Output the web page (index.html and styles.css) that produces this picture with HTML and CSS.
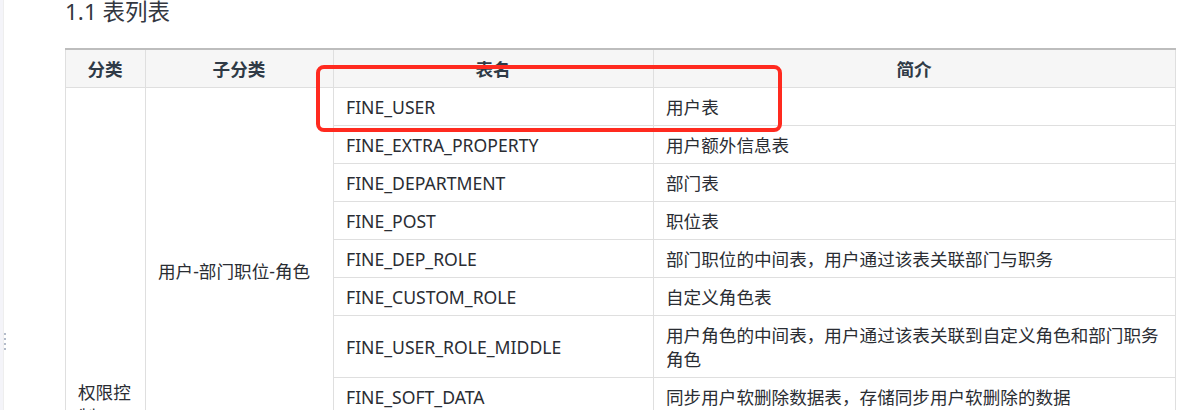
FILE: index.html
```html
<!DOCTYPE html>
<html lang="zh">
<head>
    <meta charset="UTF-8">
    <title>表列表</title>
    <link rel="stylesheet" href="styles.css">
</head>
<body>
<div class="page">
    <div class="sidebar-edge">
        <div class="drag-handle">
            <span></span><span></span><span></span><span></span>
        </div>
    </div>

    <div class="content">
        <h3 class="section-title">1.1 表列表</h3>

        <div class="table-wrap">
            <table class="doc-table">
                <colgroup>
                    <col class="col-cat">
                    <col class="col-sub">
                    <col class="col-name">
                    <col class="col-desc">
                </colgroup>
                <thead>
                <tr>
                    <th>分类</th>
                    <th>子分类</th>
                    <th>表名</th>
                    <th>简介</th>
                </tr>
                </thead>
                <tbody>
                <tr>
                    <td rowspan="16">权限控制</td>
                    <td rowspan="9">用户-部门职位-角色</td>
                    <td>FINE_USER</td>
                    <td>用户表</td>
                </tr>
                <tr>
                    <td>FINE_EXTRA_PROPERTY</td>
                    <td>用户额外信息表</td>
                </tr>
                <tr>
                    <td>FINE_DEPARTMENT</td>
                    <td>部门表</td>
                </tr>
                <tr>
                    <td>FINE_POST</td>
                    <td>职位表</td>
                </tr>
                <tr>
                    <td>FINE_DEP_ROLE</td>
                    <td>部门职位的中间表，用户通过该表关联部门与职务</td>
                </tr>
                <tr>
                    <td>FINE_CUSTOM_ROLE</td>
                    <td>自定义角色表</td>
                </tr>
                <tr>
                    <td>FINE_USER_ROLE_MIDDLE</td>
                    <td>用户角色的中间表，用户通过该表关联到自定义角色和部门职务角色</td>
                </tr>
                <tr>
                    <td>FINE_SOFT_DATA</td>
                    <td>同步用户软删除数据表，存储同步用户软删除的数据</td>
                </tr>
                <tr>
                    <td>FINE_SOFT_DATA_CONFIG</td>
                    <td>软删除数据配置表</td>
                </tr>
                <tr>
                    <td rowspan="7">权限</td>
                    <td>FINE_AUTHORITY</td>
                    <td>权限表</td>
                </tr>
                <tr>
                    <td>FINE_AUTHORITY_OBJECT</td>
                    <td>权限实体表</td>
                </tr>
                <tr>
                    <td>FINE_AUTH_PREFERENCE</td>
                    <td>权限偏好表</td>
                </tr>
                <tr>
                    <td>FINE_AUTH_TEMPLATE</td>
                    <td>权限模板表</td>
                </tr>
                <tr>
                    <td>FINE_AUTH_ENTITY</td>
                    <td>权限实体关联表</td>
                </tr>
                <tr>
                    <td>FINE_AUTH_EXTRA</td>
                    <td>权限额外信息表</td>
                </tr>
                <tr>
                    <td>FINE_AUTH_CONFIG</td>
                    <td>权限配置表</td>
                </tr>
                </tbody>
            </table>

            <div class="highlight-box"></div>
        </div>
    </div>
</div>
</body>
</html>
```

FILE: styles.css
```css
html, body {
    margin: 0;
    padding: 0;
    background: #ffffff;
}

body {
    font-family: "Noto Sans", "Noto Sans CJK SC", sans-serif;
    color: #2a2d33;
    overflow: hidden;
}

.page {
    display: flex;
    min-height: 410px;
}

.sidebar-edge {
    position: relative;
    width: 3px;
    background: #f4f4f9;
    border-right: 1px solid #eeeeee;
}

.drag-handle {
    position: absolute;
    left: 4px;
    top: 333px;
    display: flex;
    flex-direction: column;
    gap: 3px;
}

.drag-handle span {
    display: block;
    width: 2px;
    height: 2px;
    background: #b4bccb;
}

.content {
    padding-left: 61px;
}

.section-title {
    margin: 0;
    font-size: 22.5px;
    font-weight: normal;
    line-height: 23px;
    color: #333740;
}

.table-wrap {
    position: relative;
    margin-top: 25px;
}

.doc-table {
    border-collapse: collapse;
    table-layout: fixed;
    width: 1111px;
    font-size: 17.6px;
    line-height: 24px;
    border-top: 2px solid #bdbdbd;
}

.col-cat {
    width: 80px;
}

.col-sub {
    width: 188px;
}

.col-name {
    width: 320px;
}

.col-desc {
    width: 522px;
}

.doc-table th,
.doc-table td {
    border: 1px solid #dfdfdf;
    padding: 7px 13px 6px 12px;
    vertical-align: middle;
    text-align: left;
}

.doc-table th {
    background: #f6f6f6;
    font-weight: bold;
    text-align: center;
    color: #2f3a46;
}

.highlight-box {
    position: absolute;
    left: 251px;
    top: 17px;
    width: 458px;
    height: 59px;
    border: 4px solid #ff2a1f;
    border-radius: 8px;
}
```
